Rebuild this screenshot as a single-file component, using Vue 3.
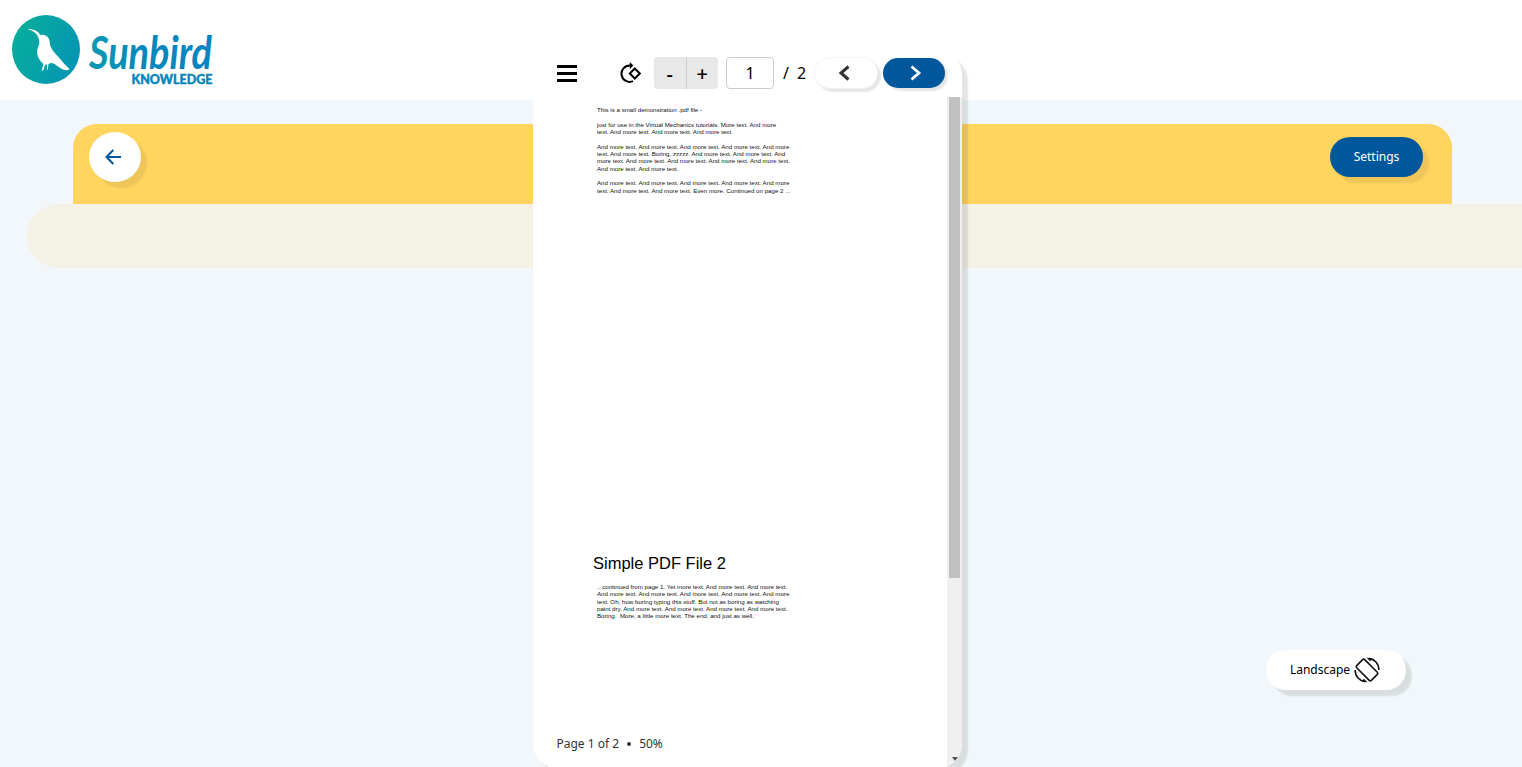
<script setup>
const pageOne = [
  ['This is a small demonstration .pdf file -'],
  ['just for use in the Virtual Mechanics tutorials. More text. And more', 'text. And more text. And more text. And more text.'],
  ['And more text. And more text. And more text. And more text. And more', 'text. And more text. Boring, zzzzz. And more text. And more text. And', 'more text. And more text. And more text. And more text. And more text.', 'And more text. And more text.'],
  ['And more text. And more text. And more text. And more text. And more', 'text. And more text. And more text. Even more. Continued on page 2 ...']
]
const pageTwo = [
  '...continued from page 1. Yet more text. And more text. And more text.',
  'And more text. And more text. And more text. And more text. And more',
  'text. Oh, how boring typing this stuff. But not as boring as watching',
  'paint dry. And more text. And more text. And more text. And more text.',
  'Boring.  More, a little more text. The end, and just as well.'
]
</script>

<template>
  <div class="app">
    <header class="header">
      <svg class="logo" width="260" height="100" viewBox="0 0 260 100">
        <defs>
          <linearGradient id="disc" x1="0" y1="0.3" x2="1" y2="0.7">
            <stop offset="0" stop-color="#07ae9b" />
            <stop offset="1" stop-color="#0594b4" />
          </linearGradient>
          <linearGradient id="word" x1="0" y1="0" x2="1" y2="0">
            <stop offset="0" stop-color="#0c9ab2" />
            <stop offset="0.4" stop-color="#0589bb" />
            <stop offset="1" stop-color="#0584bf" />
          </linearGradient>
        </defs>
        <ellipse cx="46" cy="49.500" rx="34" ry="34.500" fill="url(#disc)" />
        <path fill="#fff" d="M27.500 29.300 C32 28.300 37 30.300 40.500 35 C44 34.300 48 36 49.300 39.500 C50 42 49.500 44.500 51 47.500 C53 52 58 56 61 60 C64 64 67.500 67 69.500 69 C68 71 64.500 70.300 61 68.500 C58 67 55.500 63.500 51 63 L48.500 64 L47.800 69.500 L46.800 69.700 L47 64.500 L45 64.800 L43.500 70 L41.500 71 L43.500 64 C38.500 60 36.500 54 37.200 50 C37.500 47 39.500 45.500 39.300 42 C39.300 39.500 38.500 37.500 37 35 C34.500 31.500 31.500 30.300 27.500 29.300 Z" />
        <text x="89" y="69" class="script" textLength="123" lengthAdjust="spacingAndGlyphs" fill="url(#word)">Sunbird</text>
        <text x="131.500" y="84" class="sub" textLength="81" lengthAdjust="spacingAndGlyphs" fill="#0584bb">KNOWLEDGE</text>
      </svg>
    </header>

    <main class="content">
      <section class="banner">
        <button class="back" aria-label="Back">
          <svg width="16" height="16" viewBox="0 0 16 16" fill="none" stroke="#01579b" stroke-width="2">
            <path d="M16 8H2M8.300 1L1.500 8l6.800 7" />
          </svg>
        </button>
        <button class="settings">Settings</button>
      </section>
      <div class="strip"></div>
    </main>

    <button class="landscape">
      <span>Landscape</span>
      <svg width="26" height="26" viewBox="0 0 26 26" fill="none" stroke="#111" stroke-width="1.600">
        <rect x="7.300" y="2.600" width="11.400" height="20.800" rx="1.500" transform="rotate(-45 13 13)" />
        <path d="M15 1.400C20.500 2.200 24.800 6.500 24.900 13M11 24.600C5.500 23.800 1.200 19.500 1.100 13" />
        <path d="M12.500 .5L18.500 1.700 16 4.300zM13.500 25.500L7.500 24.300 10 21.700z" fill="#111" stroke="none" />
      </svg>
    </button>

    <aside class="viewer">
      <div class="toolbar">
        <svg class="menu" width="20" height="17" viewBox="0 0 20 17">
          <path d="M0 1.500h20M0 8.500h20M0 15.500h20" stroke="#000" stroke-width="3" />
        </svg>
        <svg class="rotate" width="22" height="22" viewBox="0 0 22 22" fill="none" stroke="#000" stroke-width="2">
          <path d="M13 19.200A8.200 8.200 0 1 1 10 3.500" />
          <path d="M9.800 0L13.300 3.500 9.800 7.300z" fill="#000" stroke="none" />
          <path d="M14.800 6.500L19.800 11.500 14.800 16.500 9.800 11.500z" />
        </svg>
        <div class="zoom"><button>-</button><button>+</button></div>
        <div class="page-number">1</div>
        <span class="slash">/</span>
        <span class="total">2</span>
        <button class="nav prev" aria-label="Previous">
          <svg width="12" height="16" viewBox="0 0 12 16" fill="none" stroke="#333" stroke-width="3"><path d="M10.500 1.500L3 8l7.500 6.500" /></svg>
        </button>
        <button class="nav next" aria-label="Next">
          <svg width="12" height="16" viewBox="0 0 12 16" fill="none" stroke="#fff" stroke-width="2.800"><path d="M1.500 1.500L9 8l-7.500 6.500" /></svg>
        </button>
      </div>
      <div class="scroller">
        <div class="pages">
          <article class="page-one">
            <p v-for="(para, i) in pageOne" :key="i">
              <span v-for="line in para" :key="line">{{ line }}</span>
            </p>
          </article>
          <article class="page-two">
            <h1>Simple PDF File 2</h1>
            <p><span v-for="line in pageTwo" :key="line">{{ line }}</span></p>
          </article>
          <footer class="status"><span>Page 1 of 2</span><i></i><span>50%</span></footer>
        </div>
        <div class="track">
          <div class="thumb"></div>
          <svg width="6" height="4" viewBox="0 0 6 4"><path d="M0 0h6L3 4z" fill="#505050" /></svg>
        </div>
      </div>
    </aside>
  </div>
</template>

<style>
body { margin: 0; overflow: hidden; }
</style>

<style scoped>
* { box-sizing: border-box; }
button { border: 0; padding: 0; font: inherit; display: flex; align-items: center; justify-content: center; }
.app { position: relative; width: 1522px; height: 767px; overflow: hidden; background: #f1f7fa; font-family: "Noto Sans", sans-serif; }
.header { height: 100px; background: #fff; }
.logo { display: block; }
.script { font: italic 700 46px Lato, sans-serif; }
.sub { font: 900 12.500px Lato, sans-serif; stroke: #0584bb; stroke-width: .4px; }
.content { padding-top: 24px; }
.banner { height: 80px; margin: 0 70px 0 73px; padding: 8px 29px 0 16px; background: #ffd45f; border-radius: 24px 24px 0 0; display: flex; justify-content: space-between; }
.back { width: 52px; height: 50px; border-radius: 50%; background: #fff; box-shadow: 6px 6px 2px rgba(0, 0, 0, .07); padding-right: 4px; }
.settings { width: 93px; height: 40px; margin-top: 5px; padding-bottom: 2px; border-radius: 20px; background: #01579b; color: #fff; font-size: 12px; box-shadow: 6px 6px 2px rgba(0, 0, 0, .07); }
.strip { height: 64px; margin-left: 27px; border-radius: 32px 0 0 32px; background: #f4f1e5; }
.landscape { position: absolute; left: 1266px; top: 650px; width: 140px; height: 40px; padding-right: 2px; border-radius: 20px; background: #fff; color: #000; font-size: 12px; gap: 4px; box-shadow: 6px 6px 2px rgba(0, 0, 0, .1); }
.landscape span { padding-bottom: 2px; }
.viewer { position: absolute; left: 533px; top: 51px; width: 429px; height: 717px; border-radius: 24px; background: #fff; overflow: hidden; display: flex; flex-direction: column; box-shadow: 6px 6px 2px rgba(0, 0, 0, .1); }
.toolbar { height: 46px; flex: none; display: flex; align-items: center; padding: 3px 17px 5px 24px; }
.toolbar > * { flex: none; }
.menu { margin-right: 43px; }
.rotate { margin-right: 12px; }
.zoom { display: flex; width: 64px; height: 32px; border-radius: 4px; overflow: hidden; background: #e8e8e8; font: 500 20px "Noto Sans", sans-serif; margin-right: 8px; }
.zoom button { flex: 1; color: #000; background: #e8e8e8; }
.zoom button + button { border-left: 1px solid #ccc; }
.page-number { width: 48px; height: 32px; border: 1px solid #ccc; border-radius: 4px; font-size: 16px; line-height: 30px; text-align: center; margin-right: 9px; }
.slash { font-size: 16px; width: 14px; }
.total { font-size: 16px; width: 18px; }
.nav { width: 62px; height: 30px; border-radius: 15px; box-shadow: 3px 3px 2px rgba(0, 0, 0, .1); }
.prev { background: #fff; margin-right: 6px; padding: 0 4px 1px 0; box-shadow: 0 0 1px 1px #f3f3f3, 3px 3px 2px 1px rgba(0, 0, 0, .1); }
.next { background: #01579b; padding: 0 0 1px 3px; }
.scroller { flex: 1; display: flex; min-height: 0; }
.pages { flex: 1; padding: 9px 0 0 60px; font-family: "Liberation Sans", Arial, sans-serif; color: #111; }
.page-one { height: 442px; padding-left: 4px; }
p { margin: 0 0 7.400px; font-size: 6.160px; line-height: 7.330px; white-space: pre; }
p span { display: block; }
h1 { margin: 0 0 7px; font-size: 16.500px; line-height: 26px; font-weight: 400; color: #000; }
.page-two { height: 186px; padding-top: 2px; }
.page-two p { padding-left: 4px; }
.status { margin-left: -36.500px; display: flex; align-items: center; font: 12px/20px "Noto Sans", sans-serif; color: #333; }
.status i { width: 4px; height: 4px; border-radius: 50%; background: #333; margin: 0 8px; }
.track { width: 15px; background: #f0f0f0; display: flex; flex-direction: column; align-items: center; justify-content: space-between; padding-bottom: 7px; }
.thumb { width: 11px; height: 481px; background: #c1c1c1; }
</style>
